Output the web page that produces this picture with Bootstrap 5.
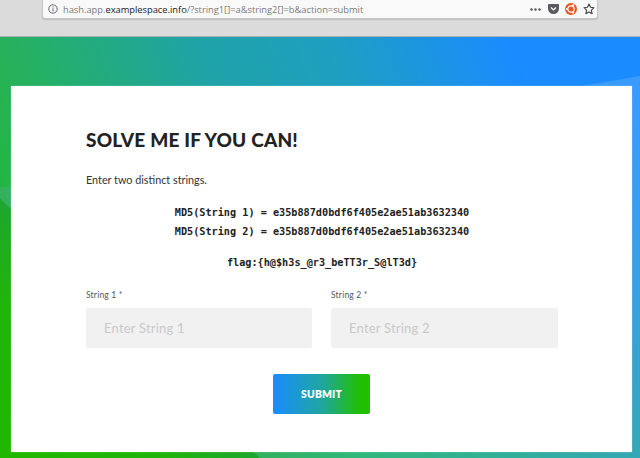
<!DOCTYPE html>
<html lang="en"><head><meta charset="utf-8">
<link href="https://cdn.jsdelivr.net/npm/bootstrap@5.3.0/dist/css/bootstrap.min.css" rel="stylesheet">
<style>
html,body{height:100%;overflow:hidden}
body{width:640px;height:458px;background:#fff;font-family:"Lato","Liberation Sans",sans-serif}
.chrome{height:37px;background:#dbdbdb;border-bottom:1px solid #a9b0b0;flex:none}
.urlbar{margin-left:42px;width:556px;height:19px;background:#f9f9f9;border:1px solid #c4c4c4;border-top:0;border-radius:0 0 3px 3px;box-shadow:0 1px 1px rgba(0,0,0,.12);font:9.3px/19px "Open Sans","Liberation Sans",sans-serif;color:#7b7b7b;padding:0 2px 0 5px}
.urlbar b{font-weight:400;color:#222}
.addr{margin-left:5px}
.tools{column-gap:6px}
.tools .dots{margin-right:1px}
.stage{position:relative;flex:1;min-height:0;padding:49px 8px 0 11px;background:linear-gradient(45deg,#1fb800 0%,#20b50a 15%,#1da62f 24.5%,#33b05c 24.5%,#30b878 33%,#34a8b4 60%,#3aa0e0 75%,#3a9bff 94%)}
.stage::before{content:"";position:absolute;inset:0;background:linear-gradient(70deg,#23b640 12%,#26b25a 19%,#1fa3a8 44%,#1f9fc0 60%,#1a8cff 83%);clip-path:polygon(0 0,100% 0,100% 39px,0 151px)}
.sheet{position:relative;background:#fff;height:366px;width:621px;padding:41px 74px 0 75px;box-shadow:0 0 1px rgba(255,255,255,.6)}
.ttl{font:900 19px/26px "Lato",sans-serif;color:#222;margin:0 0 19px;letter-spacing:.2px}
.intro{font-size:10.8px;line-height:16px;color:#333;margin:0 0 15px}
.mono{font:700 10.2px/19px "DejaVu Sans Mono",monospace;color:#222;text-align:center;margin:0}
.flagline{margin:12px 0 17px}
.lbl{font-size:8.5px;line-height:12px;color:#555;margin:0 0 7px;letter-spacing:.2px}
.fld{height:40px;background:#f1f1f1;border:0;border-radius:2px;padding:0 18px;font-size:13px;width:100%;color:#333;letter-spacing:.2px}
.fld::placeholder{color:#c9c9c9;opacity:1}
.go{width:97px;height:40px;border:0;border-radius:2px;background:linear-gradient(90deg,#1a8cff 0%,#1fa6a0 50%,#20c000 90%);color:#fff;font:800 10.3px/40px "Lato",sans-serif;padding:0;letter-spacing:.2px;margin:26px 1px 0 0}
.pair{column-gap:19px}
.slot{flex:1 1 0}
.slot-first{flex:0 0 226px}
</style></head>
<body class="d-flex flex-column">
<div class="chrome">
<div class="urlbar d-flex align-items-center">
<svg width="10" height="10" viewBox="0 0 10 10"><circle cx="5" cy="5" r="4.2" fill="none" stroke="#666" stroke-width="1"/><rect x="4.5" y="4.3" width="1" height="3" fill="#666"/><rect x="4.5" y="2.6" width="1" height="1" fill="#666"/></svg>
<span class="addr flex-grow-1 text-nowrap">hash.app.<b>examplespace.info</b>/?string1[]=a&amp;string2[]=b&amp;action=submit</span>
<span class="tools d-flex align-items-center">
<svg class="dots" width="11" height="3" viewBox="0 0 11 3"><g fill="#555"><circle cx="1.5" cy="1.5" r="1.2"/><circle cx="5.5" cy="1.5" r="1.2"/><circle cx="9.5" cy="1.5" r="1.2"/></g></svg>
<svg width="11" height="10" viewBox="0 0 11 10"><path d="M1 0h9a1 1 0 0 1 1 1v3.500a5.500 5.500 0 0 1-11 0V1a1 1 0 0 1 1-1Z" fill="#5a5a5f"/><path d="M3 3.500l2.500 2.400L8 3.500" fill="none" stroke="#fff" stroke-width="1.300"/></svg>
<svg width="12" height="12" viewBox="0 0 12 12"><circle cx="6" cy="6" r="6" fill="#e9561c"/><circle cx="6" cy="6" r="3.200" fill="none" stroke="#fff" stroke-width="1.200"/><circle cx="1.800" cy="6" r="1" fill="#fff"/><circle cx="8.200" cy="2.200" r="1" fill="#fff"/><circle cx="8.200" cy="9.800" r="1" fill="#fff"/></svg>
<svg width="12" height="12" viewBox="0 0 12 12"><path d="M6 1l1.500 3.300 3.500.400-2.600 2.400.700 3.600L6 8.900l-3.100 1.800.700-3.600L1 4.700l3.500-.400Z" fill="none" stroke="#444" stroke-width="1.100" stroke-linejoin="round"/></svg>
</span>
</div>
</div>
<div class="stage">
<div class="sheet">
<h1 class="ttl">SOLVE ME IF YOU CAN!</h1>
<p class="intro">Enter two distinct strings.</p>
<p class="mono">MD5(String 1) = e35b887d0bdf6f405e2ae51ab3632340</p>
<p class="mono">MD5(String 2) = e35b887d0bdf6f405e2ae51ab3632340</p>
<p class="mono flagline">flag:{h@$h3s_@r3_beTT3r_S@lT3d}</p>
<div class="d-flex pair">
<div class="slot-first"><div class="lbl">String 1 *</div><input class="fld" placeholder="Enter String 1"></div>
<div class="slot"><div class="lbl">String 2 *</div><input class="fld" placeholder="Enter String 2"></div>
</div>
<div class="d-flex justify-content-center"><button class="go btn">SUBMIT</button></div>
</div>
</div>
<script src="https://cdn.jsdelivr.net/npm/bootstrap@5.3.0/dist/js/bootstrap.bundle.min.js"></script>
</body></html>
